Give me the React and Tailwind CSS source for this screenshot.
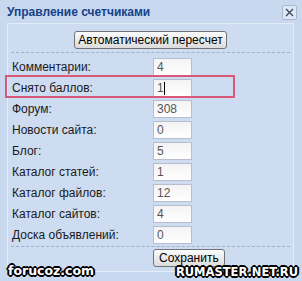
import React from 'react';

const rows = [
  ['Комментарии:', '4'],
  ['Снято баллов:', '1'],
  ['Форум:', '308'],
  ['Новости сайта:', '0'],
  ['Блог:', '5'],
  ['Каталог статей:', '1'],
  ['Каталог файлов:', '12'],
  ['Каталог сайтов:', '4'],
  ['Доска объявлений:', '0'],
];

const outline =
  '[text-shadow:1px_1px_0_#000,-1px_-1px_0_#000,1px_-1px_0_#000,-1px_1px_0_#000,2px_0_0_#000,-2px_0_0_#000,0_2px_0_#000,0_-2px_0_#000]';

const App = () => {
  return (
    <div className="relative w-[302px] h-[281px] overflow-hidden bg-[#c8d8ee] font-['Liberation_Sans',Arial,sans-serif] text-[12px] text-black">
      <div className="flex items-center justify-between h-[23px] pl-[7px] pr-[5px] pt-[1px]">
        <span className="text-[12px] font-bold text-[#15428b]">Управление счетчиками</span>
        <div className="flex items-center justify-center w-[15px] h-[15px] border border-[#a9b8cc] bg-[#dfe8f5] rounded-[2px]">
          <svg width="9" height="9" viewBox="0 0 9 9">
            <path d="M1 1L8 8M8 1L1 8" stroke="#3b4a60" strokeWidth="1.4" />
          </svg>
        </div>
      </div>

      <div className="ml-[7px] w-[287px] h-[249px] border border-[#e4ecf7] bg-[#cddcf0]">
        <div className="flex justify-center pt-[7px]">
          <button className="h-[18px] px-[3px] border border-[#6f7378] rounded-[3px] bg-gradient-to-b from-[#fbfbfb] to-[#dcdcdc] text-[12px] leading-[16px]">
            Автоматический пересчет
          </button>
        </div>
        <div className="mx-[3px] mt-[3px] border-t border-dashed border-[#9fb1ca]" />

        <div className="flex flex-col pt-[3px]">
          {rows.map(([label, value]) => (
            <div key={label} className="flex items-center h-[21px] pl-[4px]">
              <span className="w-[141px] text-[#1a1a1a]">{label}</span>
              <div className="w-[39px] h-[18px] border border-[#b7bfcc] bg-gradient-to-b from-[#f3f3f3] to-white pl-[3px] text-[#555] leading-[16px]">
                {value}
                {label === 'Снято баллов:' && <span className="inline-block w-[1px] h-[13px] bg-black align-middle" />}
              </div>
            </div>
          ))}
        </div>

        <div className="mx-[3px] mt-[1px] border-t border-dashed border-[#9fb1ca]" />
        <div className="pl-[145px] pt-[2px]">
          <button className="h-[18px] px-[5px] border border-[#6f7378] rounded-[3px] bg-gradient-to-b from-[#fbfbfb] to-[#dcdcdc] text-[12px] leading-[16px]">
            Сохранить
          </button>
        </div>
      </div>

      <div className="absolute left-[5px] top-[75px] w-[230px] h-[23px] border-2 border-[#d95a78]" />

      <span className={`absolute left-[8px] top-[262px] font-['DejaVu_Sans',sans-serif] font-bold text-[12.5px] text-white ${outline}`}>
        forucoz.com
      </span>
      <span className={`absolute right-[4px] top-[264px] font-['DejaVu_Sans',sans-serif] font-bold text-[11.5px] text-white ${outline}`}>
        RUMASTER.NET.RU
      </span>
    </div>
  );
};

export default App;
